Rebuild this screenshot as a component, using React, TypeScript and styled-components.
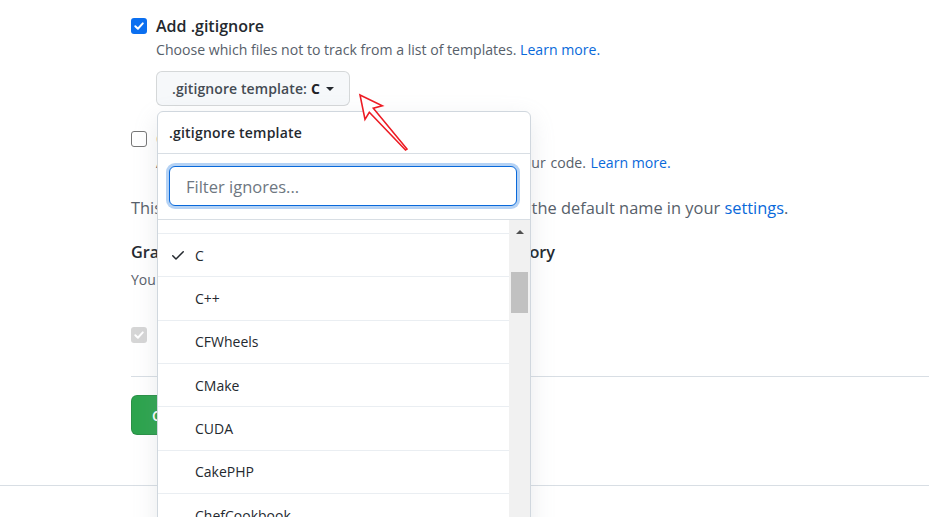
import React, { useLayoutEffect, useRef } from "react";
import styled, { createGlobalStyle } from "styled-components";

const GlobalStyle = createGlobalStyle`
  html, body { margin: 0; padding: 0; background: #ffffff; overflow: hidden; }
  body {
    font-family: "Open Sans", "Noto Sans", sans-serif;
    color: #24292f;
  }
`;

const Page = styled.div`
  position: relative;
  height: 517px;
  display: flex;
  flex-direction: column;
`;

const Main = styled.main`
  padding: 14px 0 0 131px;
  display: flex;
  flex-direction: column;
`;

const Option = styled.div<{ $mt?: number }>`
  display: flex;
  align-items: flex-start;
  margin-top: ${(p) => p.$mt ?? 0}px;
`;

type BoxState = "on" | "off" | "disabled";

const Box = styled.span<{ $state: BoxState; $top?: number; $gap?: number }>`
  flex: none;
  box-sizing: border-box;
  width: 16px;
  height: 16px;
  margin: ${(p) => p.$top ?? 4}px ${(p) => p.$gap ?? 9}px 0 0;
  border-radius: 3px;
  display: flex;
  align-items: center;
  justify-content: center;
  background: ${(p) =>
    p.$state === "on" ? "#0b6ff0" : p.$state === "disabled" ? "#d6d6d6" : "#ffffff"};
  border: ${(p) => (p.$state === "off" ? "1px solid #767676" : "none")};
`;

const OptionBody = styled.div`
  display: flex;
  flex-direction: column;
  align-items: flex-start;
`;

const Label = styled.div`
  font-size: 16px;
  line-height: 24px;
  font-weight: 600;
  color: #24292f;
`;

const Desc = styled.div<{ $wordGap?: number }>`
  margin-top: 2px;
  font-size: 14.1px;
  line-height: 20px;
  color: #57606a;
  white-space: nowrap;
  word-spacing: ${(p) => p.$wordGap ?? 0}px;
`;

const Link = styled.a`
  color: #0969da;
  text-decoration: none;
  word-spacing: 0;
`;

const ButtonWrap = styled.div`
  position: relative;
  margin-top: 11px;
`;

const SelectButton = styled.button`
  box-sizing: border-box;
  height: 35px;
  padding: 0 15px;
  display: inline-flex;
  align-items: center;
  background: #f6f8fa;
  border: 1px solid rgba(27, 31, 36, 0.15);
  border-radius: 6px;
  font-family: inherit;
  font-size: 14px;
  font-weight: 600;
  color: #444b53;
  letter-spacing: 0.1px;
  cursor: pointer;
`;

const Strong = styled.span`
  margin-left: 4px;
  color: #1f2328;
  font-weight: 700;
`;

const Caret = styled.span`
  display: inline-block;
  width: 0;
  height: 0;
  margin-left: 6px;
  border-top: 4px solid #24292f;
  border-left: 4px solid transparent;
  border-right: 4px solid transparent;
`;

const Dropdown = styled.div`
  position: absolute;
  top: calc(100% + 5px);
  left: 1px;
  z-index: 10;
  box-sizing: border-box;
  width: 374px;
  height: 440px;
  display: flex;
  flex-direction: column;
  background: #ffffff;
  border: 1px solid #d0d7de;
  border-radius: 6px;
  box-shadow: 0 8px 24px rgba(140, 149, 159, 0.2);
  overflow: hidden;
`;

const DropHeader = styled.div`
  padding: 11px 11px 10px;
  font-size: 14px;
  line-height: 20px;
  font-weight: 600;
  letter-spacing: 0.2px;
  color: #24292f;
  border-bottom: 1px solid #d8dee4;
`;

const Filter = styled.div`
  padding: 12px 13px 13px 11px;
  border-bottom: 1px solid #d8dee4;
`;

const FilterInput = styled.input`
  box-sizing: border-box;
  display: block;
  width: 100%;
  height: 40px;
  padding: 0 16px;
  border: 1px solid #0969da;
  border-radius: 6px;
  outline: none;
  box-shadow: 0 0 0 3px rgba(9, 105, 218, 0.3);
  font-family: inherit;
  font-size: 16.5px;
  color: #24292f;
  &::placeholder {
    color: #6e7781;
  }
`;

const ListArea = styled.div`
  flex: 1;
  min-height: 0;
  display: flex;
`;

const ListScroll = styled.div`
  flex: 1;
  overflow-y: scroll;
  scrollbar-width: none;
  &::-webkit-scrollbar {
    display: none;
  }
`;

const Item = styled.div`
  box-sizing: border-box;
  height: 43.333px;
  display: flex;
  align-items: center;
  gap: 9px;
  padding-left: 12px;
  border-bottom: 1px solid #eaeef2;
  font-size: 14px;
  color: #24292f;
`;

const CheckSlot = styled.span<{ $on: boolean }>`
  flex: none;
  width: 16px;
  height: 16px;
  display: flex;
  visibility: ${(p) => (p.$on ? "visible" : "hidden")};
`;

const Track = styled.div`
  flex: none;
  width: 21px;
  display: flex;
  flex-direction: column;
  align-items: center;
  background: #f1f1f1;
`;

const ArrowButton = styled.div`
  height: 24px;
  width: 100%;
  display: flex;
  align-items: center;
  justify-content: center;
`;

const ArrowUp = styled.span`
  width: 0;
  height: 0;
  border-bottom: 4px solid #505050;
  border-left: 4px solid transparent;
  border-right: 4px solid transparent;
`;

const Thumb = styled.div`
  margin-top: 28px;
  width: 17px;
  height: 41px;
  background: #c1c1c1;
`;

const BranchNote = styled.p`
  margin: 23px 0 0;
  font-size: 16.4px;
  line-height: 24px;
  color: #57606a;
  white-space: nowrap;
`;

const BranchName = styled.span`
  display: inline-block;
  padding: 0 17px;
  margin: 0 2px;
  border-radius: 6px;
  background: #ddf4ff;
  color: #0969da;
  font-family: "Liberation Mono", monospace;
  font-size: 14px;
  line-height: 22px;
`;

const Heading = styled.h3`
  margin: 19px 0 0;
  font-size: 16.3px;
  line-height: 24px;
  font-weight: 600;
  color: #24292f;
  white-space: nowrap;
`;

const SubText = styled.p`
  margin: 6px 0 0;
  font-size: 14px;
  line-height: 20px;
  color: #57606a;
`;

const AppRow = styled.div`
  margin-top: 35px;
  height: 20px;
  display: flex;
  align-items: center;
  font-size: 14px;
  color: #24292f;
`;

const Divider = styled.hr`
  margin: 31px 0 0;
  border: none;
  height: 1px;
  background: #d8dee4;
`;

const CreateButton = styled.button`
  align-self: flex-start;
  margin-top: 18px;
  box-sizing: border-box;
  height: 40px;
  padding: 0 20px;
  border: 1px solid rgba(27, 31, 36, 0.15);
  border-radius: 6px;
  background: #2da44e;
  color: #ffffff;
  font-family: inherit;
  font-size: 14px;
  font-weight: 600;
`;

const Footer = styled.footer`
  margin-top: 50px;
  flex: 1;
  border-top: 1px solid #d8dee4;
`;

const Annotation = styled.svg`
  position: absolute;
  left: 350px;
  top: 85px;
  z-index: 20;
  overflow: visible;
`;

const CheckIcon = ({ color = "#24292f", size = 16 }: { color?: string; size?: number }) => (
  <svg width={size} height={size} viewBox="0 0 16 16" fill={color} aria-hidden="true">
    <path d="M13.78 4.22a.75.75 0 0 1 0 1.06l-7.25 7.25a.75.75 0 0 1-1.06 0L2.22 9.28a.751.751 0 0 1 .018-1.042.751.751 0 0 1 1.042-.018L6 10.94l6.72-6.72a.75.75 0 0 1 1.06 0Z" />
  </svg>
);

const BoxTick = () => (
  <svg width="12" height="12" viewBox="0 0 12 12" fill="none" aria-hidden="true">
    <path d="M2.3 6.2 4.9 8.7 9.8 3.4" stroke="#ffffff" strokeWidth="2" strokeLinecap="round" strokeLinejoin="round" />
  </svg>
);

const templates = [
  "Actionscript",
  "Ada",
  "Agda",
  "Android",
  "AppEngine",
  "AppceleratorTitanium",
  "ArchLinuxPackages",
  "Autotools",
  "Ballerina",
  "C",
  "C++",
  "CFWheels",
  "CMake",
  "CUDA",
  "CakePHP",
  "ChefCookbook",
  "Clojure",
  "CodeIgniter",
  "CommonLisp",
];

const ITEM_H = 43.333;

export default function App() {
  const listRef = useRef<HTMLDivElement>(null);
  useLayoutEffect(() => {
    if (listRef.current) {
      listRef.current.scrollTop = Math.round(templates.indexOf("C") * ITEM_H - 14);
    }
  }, []);

  return (
    <>
      <GlobalStyle />
      <Page>
        <Main>
          <Option>
            <Box $state="on" role="checkbox" aria-checked="true">
              <BoxTick />
            </Box>
            <OptionBody>
              <Label>Add .gitignore</Label>
              <Desc>
                Choose which files not to track from a list of templates. <Link href="#">Learn more.</Link>
              </Desc>
              <ButtonWrap>
                <SelectButton type="button">
                  .gitignore template:<Strong>C</Strong>
                  <Caret />
                </SelectButton>
                <Dropdown>
                  <DropHeader>.gitignore template</DropHeader>
                  <Filter>
                    <FilterInput placeholder="Filter ignores..." />
                  </Filter>
                  <ListArea>
                    <ListScroll ref={listRef}>
                      {templates.map((t) => (
                        <Item key={t}>
                          <CheckSlot $on={t === "C"}>
                            <CheckIcon />
                          </CheckSlot>
                          {t}
                        </Item>
                      ))}
                    </ListScroll>
                    <Track>
                      <ArrowButton>
                        <ArrowUp />
                      </ArrowButton>
                      <Thumb />
                    </Track>
                  </ListArea>
                </Dropdown>
              </ButtonWrap>
            </OptionBody>
          </Option>

          <Option $mt={21}>
            <Box $state="off" role="checkbox" aria-checked="false" />
            <OptionBody>
              <Label>Choose a license</Label>
              <Desc $wordGap={1}>
                A license tells others what they can and can’t do with your code. <Link href="#">Learn more.</Link>
              </Desc>
            </OptionBody>
          </Option>

          <BranchNote>
            This will set <BranchName>main</BranchName> as the default branch. Change the default name in your{" "}
            <Link href="#">settings</Link>.
          </BranchNote>

          <Heading>Grant your Marketplace apps access to this repository</Heading>
          <SubText>You are subscribed to 1 Marketplace app</SubText>

          <AppRow>
            <Box $state="disabled" $top={0} $gap={12} role="checkbox" aria-checked="true" aria-disabled="true">
              <BoxTick />
            </Box>
            Azure Pipelines
          </AppRow>

          <Divider />

          <CreateButton type="button">Create repository</CreateButton>
        </Main>
        <Footer />

        <Annotation width="64" height="70" viewBox="0 0 64 70" aria-hidden="true">
          <polygon
            points="10,10 32.3,20.7 23.3,23.3 57,64 55.5,65 19.3,27.3 15,34.3"
            fill="#ffffff"
            stroke="#ed1c24"
            strokeWidth="1.6"
            strokeLinejoin="miter"
          />
        </Annotation>
      </Page>
    </>
  );
}
